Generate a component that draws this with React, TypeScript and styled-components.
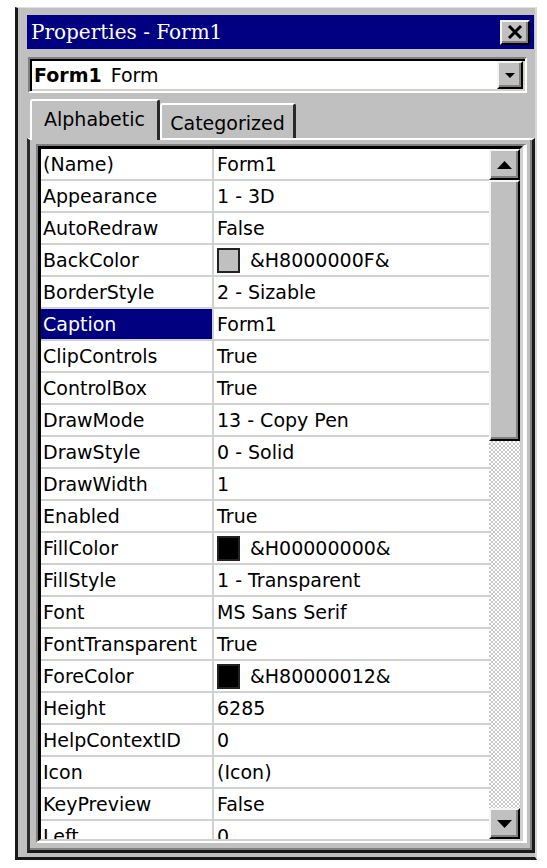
import React from "react";
import styled, { createGlobalStyle } from "styled-components";

const Global = createGlobalStyle`
  html, body { margin: 0; padding: 0; background: #ffffff; }
  body { font-family: "DejaVu Sans", "Noto Sans", sans-serif; color: #000; }
`;

const Window = styled.div`
  box-sizing: border-box;
  margin: 7px 0 0 15px;
  width: 522px;
  height: 853px;
  background: #c0c0c0;
  border-top: 1px solid #e0e0e0;
  border-left: 3px solid #181818;
  border-right: 2px solid #d8d8d8;
  border-bottom: 3px solid #181818;
  padding: 7px 0 4px 9px;
  display: flex;
  flex-direction: column;
`;

const TitleBar = styled.div`
  height: 34px;
  margin-right: 1px;
  flex: none;
  background: #000080;
  display: flex;
  align-items: center;
  justify-content: space-between;
  padding: 0 4px 0 4px;
`;

const TitleText = styled.span`
  font-family: "DejaVu Serif", "Liberation Serif", serif;
  font-size: 20px;
  color: #ffffff;
  white-space: nowrap;
`;

const raised = `
  background: #c0c0c0;
  border-style: solid;
  border-width: 2px;
  border-color: #f4f4f4 #000000 #000000 #f4f4f4;
  box-shadow: inset -2px -2px #808080;
`;

const CloseButton = styled.div`
  box-sizing: border-box;
  width: 30px;
  height: 25px;
  ${raised}
  display: flex;
  align-items: center;
  justify-content: center;
  padding-bottom: 1px;
`;

const Combo = styled.div`
  box-sizing: border-box;
  flex: none;
  margin: 8px 8px 0 1px;
  height: 36px;
  background: #ffffff;
  border-style: solid;
  border-width: 2px;
  border-color: #808080 #ffffff #ffffff #808080;
  box-shadow: inset 2px 2px #000000, inset -2px -2px #d4d0c8;
  padding: 2px;
  display: flex;
  align-items: stretch;
`;

const ComboText = styled.div`
  flex: 1;
  display: flex;
  align-items: center;
  padding-left: 2px;
  font-size: 19px;
  white-space: nowrap;
`;

const Bold = styled.span`
  font-weight: bold;
  margin-right: 9px;
`;

const DropButton = styled.div`
  box-sizing: border-box;
  width: 26px;
  ${raised}
  display: flex;
  align-items: center;
  justify-content: center;
`;

const TabStrip = styled.div`
  flex: none;
  margin-top: 6px;
  height: 39px;
  padding-left: 3px;
  display: flex;
  align-items: flex-end;
  position: relative;
  z-index: 1;
`;

const Tab = styled.div<{ $active?: boolean }>`
  box-sizing: border-box;
  background: #c0c0c0;
  width: ${(p) => (p.$active ? "130px" : "136px")};
  height: ${(p) => (p.$active ? "41px" : "35px")};
  margin-bottom: ${(p) => (p.$active ? "-2px" : "0")};
  border-style: solid;
  border-width: 2px 3px 0 2px;
  border-color: #ffffff #2a2a2a #c0c0c0 #ffffff;
  border-radius: 3px 3px 0 0;
  display: flex;
  justify-content: center;
  align-items: ${(p) => (p.$active ? "flex-start" : "center")};
  padding-top: ${(p) => (p.$active ? "7px" : "3px")};
  font-size: 19px;
  white-space: nowrap;
`;

const Panel = styled.div`
  box-sizing: border-box;
  flex: 1;
  min-height: 0;
  border-top: 2px solid #ffffff;
  border-left: 3px solid #2a2a2a;
  border-right: 3px solid #1a1a1a;
  border-bottom: 3px solid #1a1a1a;
  box-shadow: inset -2px -2px #808080;
  padding: 4px 5px 7px 6px;
  display: flex;
  flex-direction: column;
`;

const Frame = styled.div`
  flex: 1;
  min-height: 0;
  display: flex;
  border-style: solid;
  border-width: 2px 4px 2px 2px;
  border-color: #808080 #ffffff #ffffff #808080;
`;

const GridWrap = styled.div`
  flex: 1;
  min-height: 0;
  display: flex;
  overflow: hidden;
  border-style: solid;
  border-width: 3px 3px 2px 3px;
  border-color: #000000 #d0d0d0 #d0d0d0 #000000;
  background: #ffffff;
`;

const List = styled.div`
  flex: 1;
  min-width: 0;
  overflow: hidden;
`;

const Row = styled.div`
  box-sizing: border-box;
  height: 32px;
  display: grid;
  grid-template-columns: 171px 1fr;
  column-gap: 2px;
  padding-bottom: 2px;
  background: #d0d0d0;
`;

const Cell = styled.div<{ $selected?: boolean; $value?: boolean }>`
  background: ${(p) => (p.$selected ? "#000080" : "#ffffff")};
  color: ${(p) => (p.$selected ? "#ffffff" : "#000000")};
  display: flex;
  align-items: center;
  padding-left: ${(p) => (p.$value ? "3px" : "2px")};
  font-size: 19px;
  white-space: nowrap;
  overflow: hidden;
`;

const Swatch = styled.span<{ $color: string }>`
  box-sizing: border-box;
  flex: none;
  width: 23px;
  height: 25px;
  border: 2px solid #222;
  background: ${(p) => p.$color};
  margin-right: 10px;
`;

const Scrollbar = styled.div`
  flex: none;
  width: 31px;
  display: flex;
  flex-direction: column;
`;

const ScrollButton = styled.div`
  box-sizing: border-box;
  flex: none;
  height: 31px;
  ${raised}
  display: flex;
  align-items: center;
  justify-content: center;
`;

const Thumb = styled.div`
  box-sizing: border-box;
  flex: none;
  height: 261px;
  ${raised}
`;

const Track = styled.div`
  flex: 1;
  background-color: #ffffff;
  background-image: conic-gradient(#c8c8c8 25%, #ffffff 0 50%, #c8c8c8 0 75%, #ffffff 0);
  background-size: 4px 4px;
`;

type Prop = { name: string; value: string; swatch?: string; selected?: boolean };

const props: Prop[] = [
  { name: "(Name)", value: "Form1" },
  { name: "Appearance", value: "1 - 3D" },
  { name: "AutoRedraw", value: "False" },
  { name: "BackColor", value: "&H8000000F&", swatch: "#c0c0c0" },
  { name: "BorderStyle", value: "2 - Sizable" },
  { name: "Caption", value: "Form1", selected: true },
  { name: "ClipControls", value: "True" },
  { name: "ControlBox", value: "True" },
  { name: "DrawMode", value: "13 - Copy Pen" },
  { name: "DrawStyle", value: "0 - Solid" },
  { name: "DrawWidth", value: "1" },
  { name: "Enabled", value: "True" },
  { name: "FillColor", value: "&H00000000&", swatch: "#000000" },
  { name: "FillStyle", value: "1 - Transparent" },
  { name: "Font", value: "MS Sans Serif" },
  { name: "FontTransparent", value: "True" },
  { name: "ForeColor", value: "&H80000012&", swatch: "#000000" },
  { name: "Height", value: "6285" },
  { name: "HelpContextID", value: "0" },
  { name: "Icon", value: "(Icon)" },
  { name: "KeyPreview", value: "False" },
  { name: "Left", value: "0" },
];

const ArrowUp = () => (
  <svg width="15" height="8" viewBox="0 0 15 8">
    <polygon points="7.5,0 15,8 0,8" fill="#000" />
  </svg>
);

const ArrowDown = ({ w = 15, h = 8 }: { w?: number; h?: number }) => (
  <svg width={w} height={h} viewBox={`0 0 ${w} ${h}`}>
    <polygon points={`0,0 ${w},0 ${w / 2},${h}`} fill="#000" />
  </svg>
);

const CloseIcon = () => (
  <svg width="16" height="14" viewBox="0 0 16 14">
    <path d="M2 1 L14 13 M14 1 L2 13" stroke="#000" strokeWidth="3" />
  </svg>
);

export default function App() {
  return (
    <>
      <Global />
      <Window>
        <TitleBar>
          <TitleText>Properties - Form1</TitleText>
          <CloseButton>
            <CloseIcon />
          </CloseButton>
        </TitleBar>
        <Combo>
          <ComboText>
            <Bold>Form1</Bold>Form
          </ComboText>
          <DropButton>
            <ArrowDown w={10} h={5} />
          </DropButton>
        </Combo>
        <TabStrip>
          <Tab $active>Alphabetic</Tab>
          <Tab>Categorized</Tab>
        </TabStrip>
        <Panel>
          <Frame>
            <GridWrap>
              <List>
                {props.map((p) => (
                  <Row key={p.name}>
                    <Cell $selected={p.selected}>{p.name}</Cell>
                    <Cell $value>
                      {p.swatch && <Swatch $color={p.swatch} />}
                      {p.value}
                    </Cell>
                  </Row>
                ))}
              </List>
              <Scrollbar>
                <ScrollButton>
                  <ArrowUp />
                </ScrollButton>
                <Thumb />
                <Track />
                <ScrollButton>
                  <ArrowDown />
                </ScrollButton>
              </Scrollbar>
            </GridWrap>
          </Frame>
        </Panel>
      </Window>
    </>
  );
}
